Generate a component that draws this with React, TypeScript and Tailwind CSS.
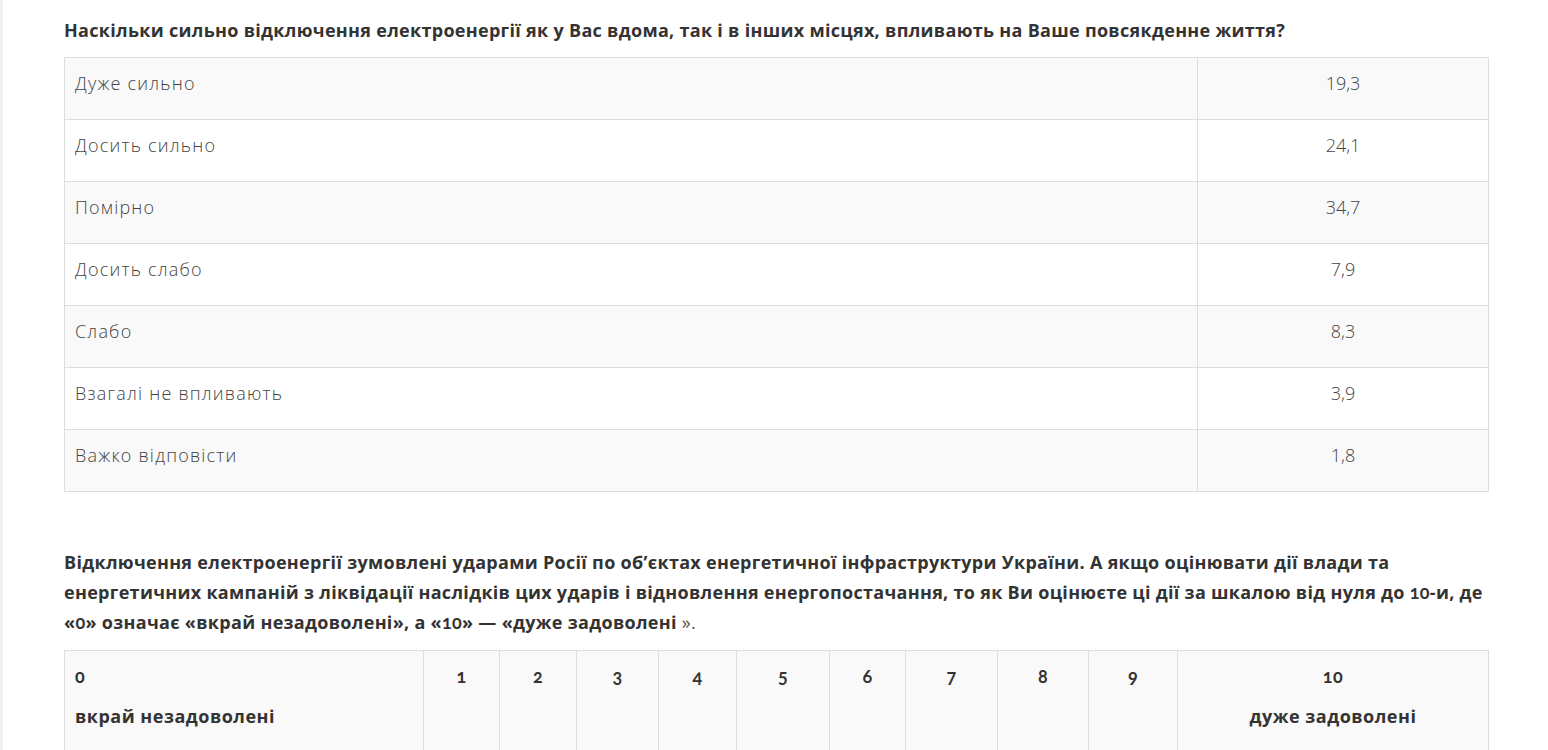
import React from 'react'

const rows = [
    ['Дуже сильно', '19,3'],
    ['Досить сильно', '24,1'],
    ['Помірно', '34,7'],
    ['Досить слабо', '7,9'],
    ['Слабо', '8,3'],
    ['Взагалі не впливають', '3,9'],
    ['Важко відповісти', '1,8'],
]

const scale = [
    { n: '1', w: 'w-[76px]' },
    { n: '2', w: 'w-[77px]' },
    { n: '3', w: 'w-[82px]' },
    { n: '4', w: 'w-[78px]' },
    { n: '5', w: 'w-[93px]' },
    { n: '6', w: 'w-[76px]' },
    { n: '7', w: 'w-[92px]' },
    { n: '8', w: 'w-[91px]' },
    { n: '9', w: 'w-[89px]' },
]

// Lato has old-style figures, the rest of the text stays in Open Sans
function Num({ children }: { children: React.ReactNode }) {
    return <span className="font-['Lato'] oldstyle-nums">{children}</span>
}

export default function App() {
    return (
        <div className="min-h-[750px] bg-white border-l-[3px] border-[#f0f0f0] text-[#333] font-['Open_Sans',sans-serif]">
            <div className="ml-[61px] w-[1425px] pt-[15px]">
                <h3 className="text-[18px] leading-[30px] font-bold tracking-[0.3px] text-[#333]">
                    Наскільки сильно відключення електроенергії як у Вас вдома, так і в інших місцях, впливають на Ваше
                    повсякденне життя?
                </h3>

                <div className="mt-[12px] border-t border-l border-[#ddd]">
                    {rows.map(([label, value], i) => (
                        <div key={label} className={`flex h-[62px] ${i % 2 === 0 ? 'bg-[#f9f9f9]' : 'bg-white'}`}>
                            <div className="w-[1133px] border-r border-b border-[#ddd] px-[10px] pt-[12px] text-[18px] leading-[26px] font-light tracking-[1.2px] text-[#444]">
                                {label}
                            </div>
                            <div className="flex-1 border-r border-b border-[#ddd] pt-[12px] text-center text-[18px] leading-[26px] font-light text-[#444]">
                                {value}
                            </div>
                        </div>
                    ))}
                </div>

                <h3 className="mt-[55px] w-[1440px] text-[18px] leading-[30px] font-bold tracking-[0.3px] text-[#333]">
                    Відключення електроенергії зумовлені ударами Росії по об’єктах енергетичної інфраструктури України. А
                    якщо оцінювати дії влади та
                    <br />
                    енергетичних кампаній з ліквідації наслідків цих ударів і відновлення енергопостачання, то як Ви
                    оцінюєте ці дії за шкалою від нуля до <Num>10</Num>-и, де
                    <br />«<Num>0</Num>» означає «вкрай незадоволені», а «<Num>10</Num>» — «дуже задоволені{' '}
                    <span className="font-normal text-[#555]">».</span>
                </h3>

                <div className="mt-[13px] flex h-[120px] border-t border-l border-[#ddd] bg-[#f9f9f9] text-[18px] font-bold tracking-[0.5px] text-[#333]">
                    <div className="w-[359px] border-r border-[#ddd] px-[10px] pt-[12px] leading-[26px]">
                        <p>
                            <Num>0</Num>
                        </p>
                        <p className="mt-[14px]">вкрай незадоволені</p>
                    </div>
                    {scale.map((s) => (
                        <div key={s.n} className={`${s.w} border-r border-[#ddd] pt-[12px] text-center leading-[26px]`}>
                            <Num>{s.n}</Num>
                        </div>
                    ))}
                    <div className="flex-1 border-r border-[#ddd] pt-[12px] text-center leading-[26px]">
                        <p>
                            <Num>10</Num>
                        </p>
                        <p className="mt-[14px]">дуже задоволені</p>
                    </div>
                </div>
            </div>
        </div>
    )
}
